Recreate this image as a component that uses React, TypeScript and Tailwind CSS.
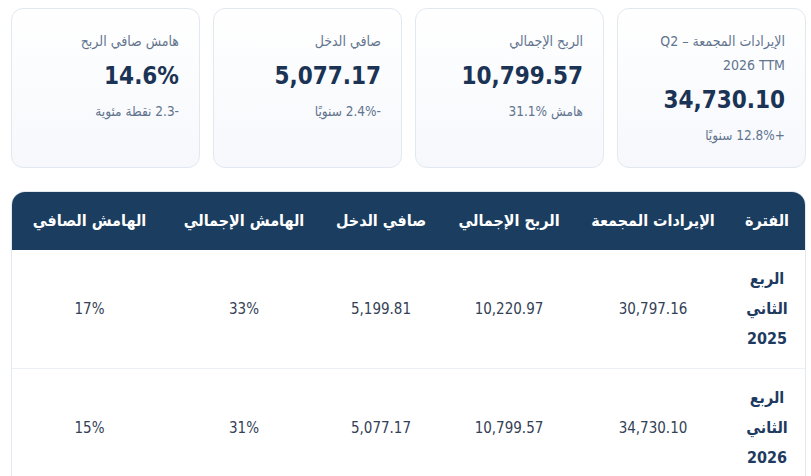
const stats = [
  { label: "الإيرادات المجمعة – Q2 2026 TTM", value: "34,730.10", note: "+12.8% سنويًا" },
  { label: "الربح الإجمالي", value: "10,799.57", note: "هامش %31.1" },
  { label: "صافي الدخل", value: "5,077.17", note: "-2.4% سنويًا" },
  { label: "هامش صافي الربح", value: "14.6%", note: "-2.3 نقطة مئوية" },
];

const columns = [
  { title: "الفترة", width: "w-[76px]" },
  { title: "الإيرادات المجمعة", width: "w-[152px]" },
  { title: "الربح الإجمالي", width: "w-[136px]" },
  { title: "صافي الدخل", width: "w-[120px]" },
  { title: "الهامش الإجمالي", width: "w-[154px]" },
  { title: "الهامش الصافي", width: "w-[155px]" },
];

const rows = [
  { period: "الربع الثاني 2025", revenue: "30,797.16", gross: "10,220.97", net: "5,199.81", grossMargin: "33%", netMargin: "17%" },
  { period: "الربع الثاني 2026", revenue: "34,730.10", gross: "10,799.57", net: "5,077.17", grossMargin: "31%", netMargin: "15%" },
];

export default function App() {
  return (
    <div
      dir="rtl"
      className="min-h-screen bg-white pt-2 pl-[11px] pr-[5px] font-['DejaVu_Sans_Condensed','DejaVu_Sans',sans-serif]"
    >
      {/* KPI cards */}
      <div className="grid grid-cols-4 gap-[13px]">
        {stats.map((s) => (
          <div
            key={s.value}
            className="rounded-xl border border-slate-200 bg-linear-to-b from-white to-[#f6f8fc] px-5 pt-5 pb-5"
          >
            <div className="text-[14px] leading-6 text-slate-500">{s.label}</div>
            <div className="mt-[5px] text-[24px] font-bold leading-[36px] text-[#1b3354]">{s.value}</div>
            <div className="mt-[5px] text-[13.5px] leading-6 text-slate-500">{s.note}</div>
          </div>
        ))}
      </div>

      {/* Quarterly table */}
      <div className="mt-[23px] overflow-hidden rounded-t-[14px] border border-slate-200">
        <table className="w-full table-fixed border-collapse">
          <thead>
            <tr className="bg-[#1b3d5f]">
              {columns.map((c) => (
                <th
                  key={c.title}
                  className={`${c.width} h-[58px] px-2 text-center text-[16px] font-bold leading-6 text-white`}
                >
                  {c.title}
                </th>
              ))}
            </tr>
          </thead>
          <tbody>
            {rows.map((r) => (
              <tr key={r.period} className="border-b border-[#eceff3]">
                <td className="px-3 py-[14px] text-center text-[16px] font-bold leading-[30px] text-[#1e3a5f]">
                  {r.period}
                </td>
                <td className="px-3 text-center text-[15px] text-[#334155]">{r.revenue}</td>
                <td className="px-3 text-center text-[15px] text-[#334155]">{r.gross}</td>
                <td className="px-3 text-center text-[15px] text-[#334155]">{r.net}</td>
                <td className="px-3 text-center text-[15px] text-[#334155]">{r.grossMargin}</td>
                <td className="px-3 text-center text-[15px] text-[#334155]">{r.netMargin}</td>
              </tr>
            ))}
          </tbody>
        </table>
      </div>
    </div>
  );
}
